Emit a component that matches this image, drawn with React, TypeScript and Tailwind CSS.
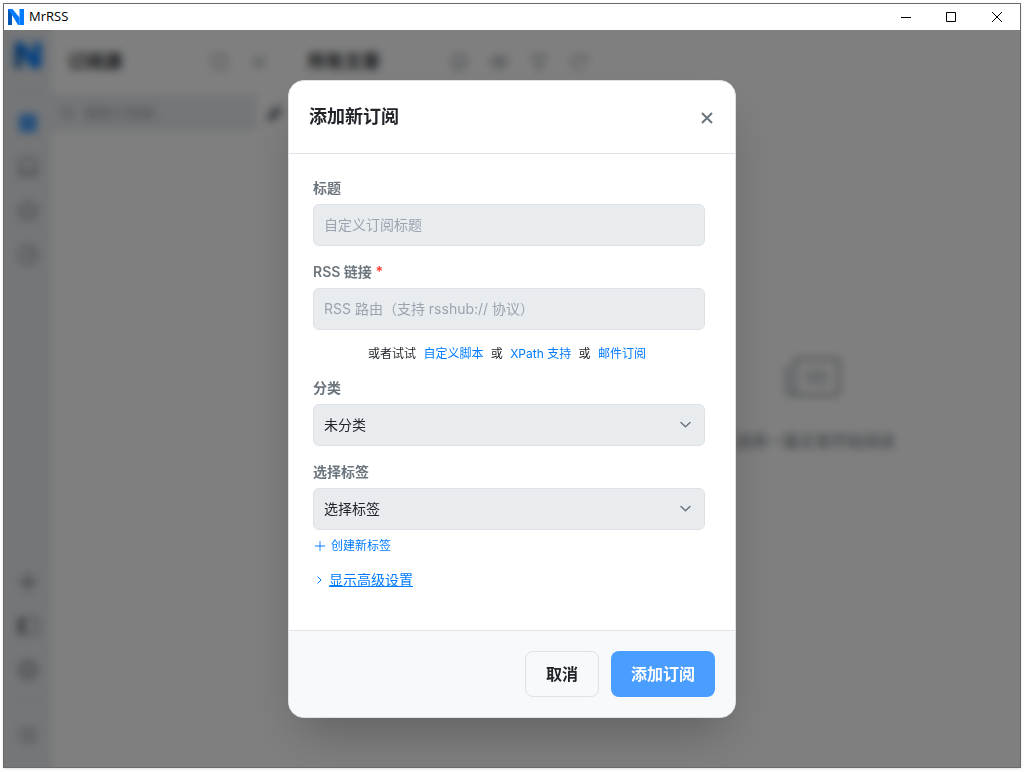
import { useState } from "react";
import {
  PiArrowClockwise,
  PiCheckCircle,
  PiCheckSquareOffset,
  PiClock,
  PiEye,
  PiFunnel,
  PiGear,
  PiMagnifyingGlass,
  PiNewspaper,
  PiPencilSimpleFill,
  PiPlus,
  PiPlusBold,
  PiSidebarSimpleFill,
  PiSquaresFourFill,
  PiStar,
  PiTextIndent,
  PiTray,
  PiX,
} from "react-icons/pi";

const fontStack = "font-['Inter','Noto_Sans_CJK_SC',sans-serif]";

function Logo({ className }: { className: string }) {
  return (
    <svg viewBox="0 0 16 16" className={className} aria-hidden="true">
      <path d="M0 0h4v16H0z" fill="#0056b3" />
      <path d="M11.5 0H16v16h-4.5z" fill="#007bff" />
      <path d="M0 0h4.5l7 8.5V16h-1.5L4 6z" fill="#007bff" />
    </svg>
  );
}

function TitleBar() {
  return (
    <header className="flex h-[26px] shrink-0 items-center bg-white pl-1 text-black">
      <Logo className="size-4" />
      <h1 className="ml-[5px] flex-1 font-['Open_Sans','Noto_Sans',sans-serif] text-[13px]">
        MrRSS
      </h1>
      <button aria-label="最小化" className="flex w-[45px] justify-center">
        <svg viewBox="0 0 10 10" className="size-[10px]" stroke="currentColor">
          <path d="M0 5.5h10" />
        </svg>
      </button>
      <button aria-label="最大化" className="flex w-[46px] justify-center">
        <svg viewBox="0 0 10 10" className="size-[10px]" stroke="currentColor" fill="none">
          <path d="M.5.5h9v9h-9z" />
        </svg>
      </button>
      <button aria-label="关闭窗口" className="flex w-[46px] justify-center">
        <svg viewBox="0 0 10 10" className="size-[10px]" stroke="currentColor">
          <path d="M0 0l10 10M10 0L0 10" />
        </svg>
      </button>
    </header>
  );
}

function Sidebar() {
  const top = [
    { label: "全部", icon: PiSquaresFourFill, active: true },
    { label: "未读", icon: PiTray },
    { label: "收藏", icon: PiStar },
    { label: "稍后阅读", icon: PiClock },
  ];
  const bottom = [
    { label: "添加订阅", icon: PiPlusBold },
    { label: "切换侧栏", icon: PiSidebarSimpleFill },
    { label: "设置", icon: PiGear },
  ];

  return (
    <nav className="flex w-12 shrink-0 flex-col items-center bg-[#e9ecef] text-[#6c757d]">
      <Logo className="mt-3 size-[26px]" />
      <div className="mt-6 h-px w-8 bg-[#dee2e6]" />
      <div className="mt-3 flex flex-col gap-2">
        {top.map(({ label, icon: Icon, active }) => (
          <button
            key={label}
            aria-label={label}
            className={`flex size-9 items-center justify-center ${
              active ? "text-[#007bff]" : ""
            }`}
          >
            <Icon className="size-6" />
          </button>
        ))}
      </div>
      <div className="mt-auto flex flex-col gap-2">
        {bottom.map(({ label, icon: Icon }) => (
          <button
            key={label}
            aria-label={label}
            className="flex size-9 items-center justify-center"
          >
            <Icon className="size-6" />
          </button>
        ))}
      </div>
      <div className="mt-3 h-px w-8 bg-[#dee2e6]" />
      <button aria-label="收起列表" className="mt-4 mb-3.5 flex size-9 items-center justify-center">
        <PiTextIndent className="size-6" />
      </button>
    </nav>
  );
}

function FeedList() {
  return (
    <section className="flex w-[235px] shrink-0 flex-col border-r border-[#f1f3f5]">
      <div className="flex h-16 items-center pr-[17px] pl-4">
        <h2 className="flex-1 text-lg font-bold">订阅源</h2>
        <div className="flex gap-5 text-[#6c757d]">
          <PiCheckSquareOffset className="size-5" />
          <PiX className="size-5" />
        </div>
      </div>
      <div className="flex items-center gap-2">
        <div className="flex h-[37px] flex-1 items-center gap-2 bg-[#e9ecef] pl-2 text-[#6c757d]">
          <PiMagnifyingGlass className="size-4" />
          <input
            aria-label="搜索订阅源"
            placeholder="搜索订阅源..."
            className="w-36 text-sm placeholder:text-[#9ca3af]"
          />
        </div>
        <PiPencilSimpleFill className="mr-px size-5 text-[#6c757d]" />
      </div>
    </section>
  );
}

function ArticleList() {
  return (
    <section className="w-[323px] shrink-0 border-r border-[#f1f3f5]">
      <div className="flex h-16 items-center pr-5 pl-[21px]">
        <h2 className="flex-1 text-lg font-bold">所有文章</h2>
        <div className="flex gap-5 text-[#6c757d]">
          <PiCheckCircle className="size-5" />
          <PiEye className="size-5" />
          <PiFunnel className="size-5" />
          <PiArrowClockwise className="size-5" />
        </div>
      </div>
    </section>
  );
}

function Chevron() {
  return (
    <svg
      viewBox="0 0 20 20"
      className="pointer-events-none absolute top-[11px] right-[9px] size-5 text-[#6b7280]"
      fill="none"
      stroke="currentColor"
      strokeWidth="1.5"
      strokeLinecap="round"
      strokeLinejoin="round"
    >
      <path d="M5 7.5l4.5 4.25L14 7.5" />
    </svg>
  );
}

const labelClass = "mb-1.5 block text-sm font-semibold text-[#6c757d]";
const fieldClass =
  "block h-[42px] w-full rounded-md border border-[#dee2e6] bg-[#e9ecef] px-2.5 text-sm placeholder:text-[#9ca3af]";

function AddFeedModal() {
  const [title, setTitle] = useState("");
  const [url, setUrl] = useState("");

  return (
    <div
      role="dialog"
      aria-labelledby="modal-title"
      className="relative w-full max-w-md overflow-hidden rounded-2xl border border-[#dee2e6] bg-white shadow-2xl"
    >
      <div className="flex items-center justify-between border-b border-[#dee2e6] p-5">
        <h3 id="modal-title" className="text-lg leading-8 font-bold">
          添加新订阅
        </h3>
        <button aria-label="关闭" className="text-[#6c757d]">
          <svg viewBox="0 0 16 16" className="size-4" stroke="currentColor" strokeWidth="2">
            <path d="M3 4l10 10M13 4l-10 10" />
          </svg>
        </button>
      </div>

      <form className="flex flex-col gap-4 pt-6 pr-[30px] pb-10 pl-6">
        <div>
          <label htmlFor="feed-title" className={labelClass}>
            标题
          </label>
          <input
            id="feed-title"
            value={title}
            onChange={(e) => setTitle(e.target.value)}
            placeholder="自定义订阅标题"
            className={fieldClass}
          />
        </div>

        <div>
          <label htmlFor="feed-url" className={labelClass}>
            RSS 链接 <span className="text-[#ff3b30]">*</span>
          </label>
          <input
            id="feed-url"
            value={url}
            onChange={(e) => setUrl(e.target.value)}
            placeholder="RSS 路由（支持 rsshub:// 协议）"
            className={fieldClass}
          />
        </div>

        <p className="text-center text-xs">
          或者试试 <a href="#script" className="mx-1 text-[#007bff]">自定义脚本</a> 或{" "}
          <a href="#xpath" className="mx-1 text-[#007bff]">XPath 支持</a> 或{" "}
          <a href="#email" className="mx-1 text-[#007bff]">邮件订阅</a>
        </p>

        <div>
          <label htmlFor="feed-category" className={labelClass}>
            分类
          </label>
          <div className="relative">
            <select id="feed-category" className={`${fieldClass} appearance-none`}>
              <option>未分类</option>
            </select>
            <Chevron />
          </div>
        </div>

        <div>
          <label htmlFor="feed-tags" className={labelClass}>
            选择标签
          </label>
          <div className="relative">
            <select id="feed-tags" className={`${fieldClass} appearance-none`}>
              <option>选择标签</option>
            </select>
            <Chevron />
          </div>
          <button type="button" className="mt-2 flex items-center gap-1 text-xs text-[#007bff]">
            <PiPlus className="size-[14px]" />
            创建新标签
          </button>
        </div>

        <button type="button" className="flex items-center gap-1 text-sm text-[#007bff]">
          <svg viewBox="0 0 12 12" className="size-3" fill="none" stroke="currentColor">
            <path d="M4.5 2.5L8 6l-3.5 3.5" />
          </svg>
          <span className="underline">显示高级设置</span>
        </button>
      </form>

      <div className="flex justify-end gap-3 border-t border-[#dee2e6] bg-[#f8f9fa] p-5">
        <button className="h-[46px] rounded-lg border border-[#dee2e6] px-5 font-bold">
          取消
        </button>
        <button className="h-[46px] rounded-lg bg-[#4a9eff] px-5 font-bold text-white">
          添加订阅
        </button>
      </div>
    </div>
  );
}

export default function App() {
  return (
    <div className="h-screen bg-white pt-[3px] pr-1 pb-1 pl-[3px]">
      <div
        className={`flex h-full flex-col border border-[#6b6b6b] bg-white text-[#212529] shadow-sm ${fontStack}`}
      >
        <TitleBar />
        <div className="relative flex min-h-0 flex-1 overflow-hidden">
          <Sidebar />
          <FeedList />
          <ArticleList />
          <main className="flex min-w-0 flex-1 flex-col items-center justify-center text-[#6c757d]">
            <PiNewspaper className="size-16 opacity-50" />
            <p className="mt-5">选择一篇文章开始阅读</p>
          </main>

          <div className="absolute inset-0 flex items-center justify-center bg-black/50 backdrop-blur-xs">
            <AddFeedModal />
          </div>
        </div>
      </div>
    </div>
  );
}
